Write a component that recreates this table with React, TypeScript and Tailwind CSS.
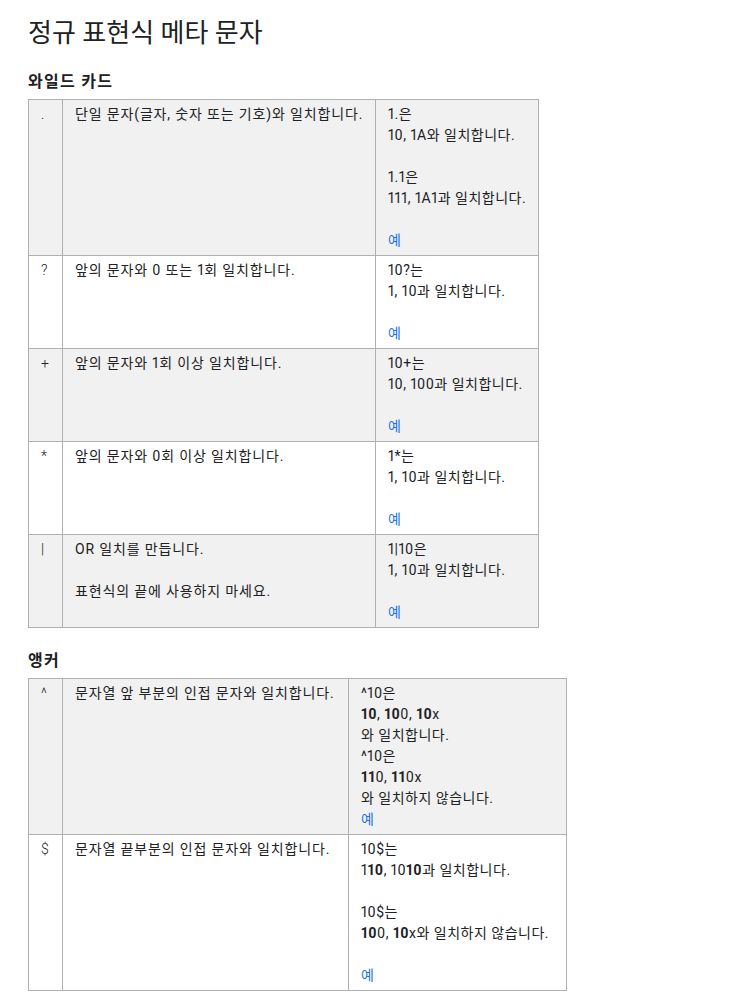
import React from "react";

const FONT = { fontFamily: 'Roboto, "Noto Sans CJK KR", sans-serif' };

function Link() {
  return <span className="text-[#1a73e8]">예</span>;
}

function Blank() {
  return <div className="h-[21px]" />;
}

type Row = { sym: React.ReactNode; desc: React.ReactNode; ex: React.ReactNode };

function Table({ rows, w2, w3 }: { rows: Row[]; w2: string; w3: string }) {
  return (
    <table className="table-fixed border-collapse text-[14px] leading-[21px] text-[#202124] proportional-nums">
      <tbody>
        {rows.map((r, i) => (
          <tr key={i} className={i % 2 === 0 ? "bg-[#f1f1f1]" : "bg-white"}>
            <td className="w-[34px] border border-[#b0b0b0] pl-[12px] pr-1 pt-[4px] pb-[4px] align-top font-light">{r.sym}</td>
            <td className={`${w2} whitespace-nowrap border border-[#b0b0b0] pl-[12px] pr-1 pt-[4px] pb-[4px] align-top tracking-[0.85px]`}>{r.desc}</td>
            <td className={`${w3} whitespace-nowrap border border-[#b0b0b0] pl-[12px] pr-1 pt-[4px] pb-[4px] align-top tracking-[0.5px]`}>{r.ex}</td>
          </tr>
        ))}
      </tbody>
    </table>
  );
}

export default function App() {
  const wild: Row[] = [
    {
      sym: ".",
      desc: "단일 문자(글자, 숫자 또는 기호)와 일치합니다.",
      ex: (
        <div>
          <div>1.은</div>
          <div>10, 1A와 일치합니다.</div>
          <Blank />
          <div>1.1은</div>
          <div>111, 1A1과 일치합니다.</div>
          <Blank />
          <div><Link /></div>
        </div>
      ),
    },
    {
      sym: "?",
      desc: "앞의 문자와 0 또는 1회 일치합니다.",
      ex: (
        <div>
          <div>10?는</div>
          <div>1, 10과 일치합니다.</div>
          <Blank />
          <div><Link /></div>
        </div>
      ),
    },
    {
      sym: "+",
      desc: "앞의 문자와 1회 이상 일치합니다.",
      ex: (
        <div>
          <div>10+는</div>
          <div>10, 100과 일치합니다.</div>
          <Blank />
          <div><Link /></div>
        </div>
      ),
    },
    {
      sym: "*",
      desc: "앞의 문자와 0회 이상 일치합니다.",
      ex: (
        <div>
          <div>1*는</div>
          <div>1, 10과 일치합니다.</div>
          <Blank />
          <div><Link /></div>
        </div>
      ),
    },
    {
      sym: "|",
      desc: (
        <div>
          <div>OR 일치를 만듭니다.</div>
          <Blank />
          <div>표현식의 끝에 사용하지 마세요.</div>
        </div>
      ),
      ex: (
        <div>
          <div>1|10은</div>
          <div>1, 10과 일치합니다.</div>
          <Blank />
          <div><Link /></div>
        </div>
      ),
    },
  ];

  const anchor: Row[] = [
    {
      sym: "^",
      desc: "문자열 앞 부분의 인접 문자와 일치합니다.",
      ex: (
        <div>
          <div>^10은</div>
          <div>
            <b>10</b>, <b>10</b>0, <b>10</b>x
          </div>
          <div>와 일치합니다.</div>
          <div>^10은</div>
          <div>
            <b>11</b>0, <b>11</b>0x
          </div>
          <div>와 일치하지 않습니다.</div>
          <div><Link /></div>
        </div>
      ),
    },
    {
      sym: "$",
      desc: "문자열 끝부분의 인접 문자와 일치합니다.",
      ex: (
        <div>
          <div>10$는</div>
          <div>
            1<b>10</b>, 10<b>10</b>과 일치합니다.
          </div>
          <Blank />
          <div>10$는</div>
          <div>
            <b>10</b>0, <b>10</b>x와 일치하지 않습니다.
          </div>
          <Blank />
          <div><Link /></div>
        </div>
      ),
    },
  ];

  return (
    <div style={FONT} className="bg-white px-[28px] pt-[15px] pb-4 text-[#202124]">
      <h1 className="text-[26px] leading-[36px] font-normal">정규 표현식 메타 문자</h1>
      <h2 className="mt-[19px] mb-[5px] text-[16px] leading-[24px] font-bold tracking-[1.3px]">와일드 카드</h2>
      <Table rows={wild} w2="w-[313px]" w3="w-[163px]" />
      <h2 className="mt-[21px] mb-[5px] text-[16px] leading-[24px] font-bold tracking-[1.3px]">앵커</h2>
      <Table rows={anchor} w2="w-[286px]" w3="w-[218px]" />
    </div>
  );
}
